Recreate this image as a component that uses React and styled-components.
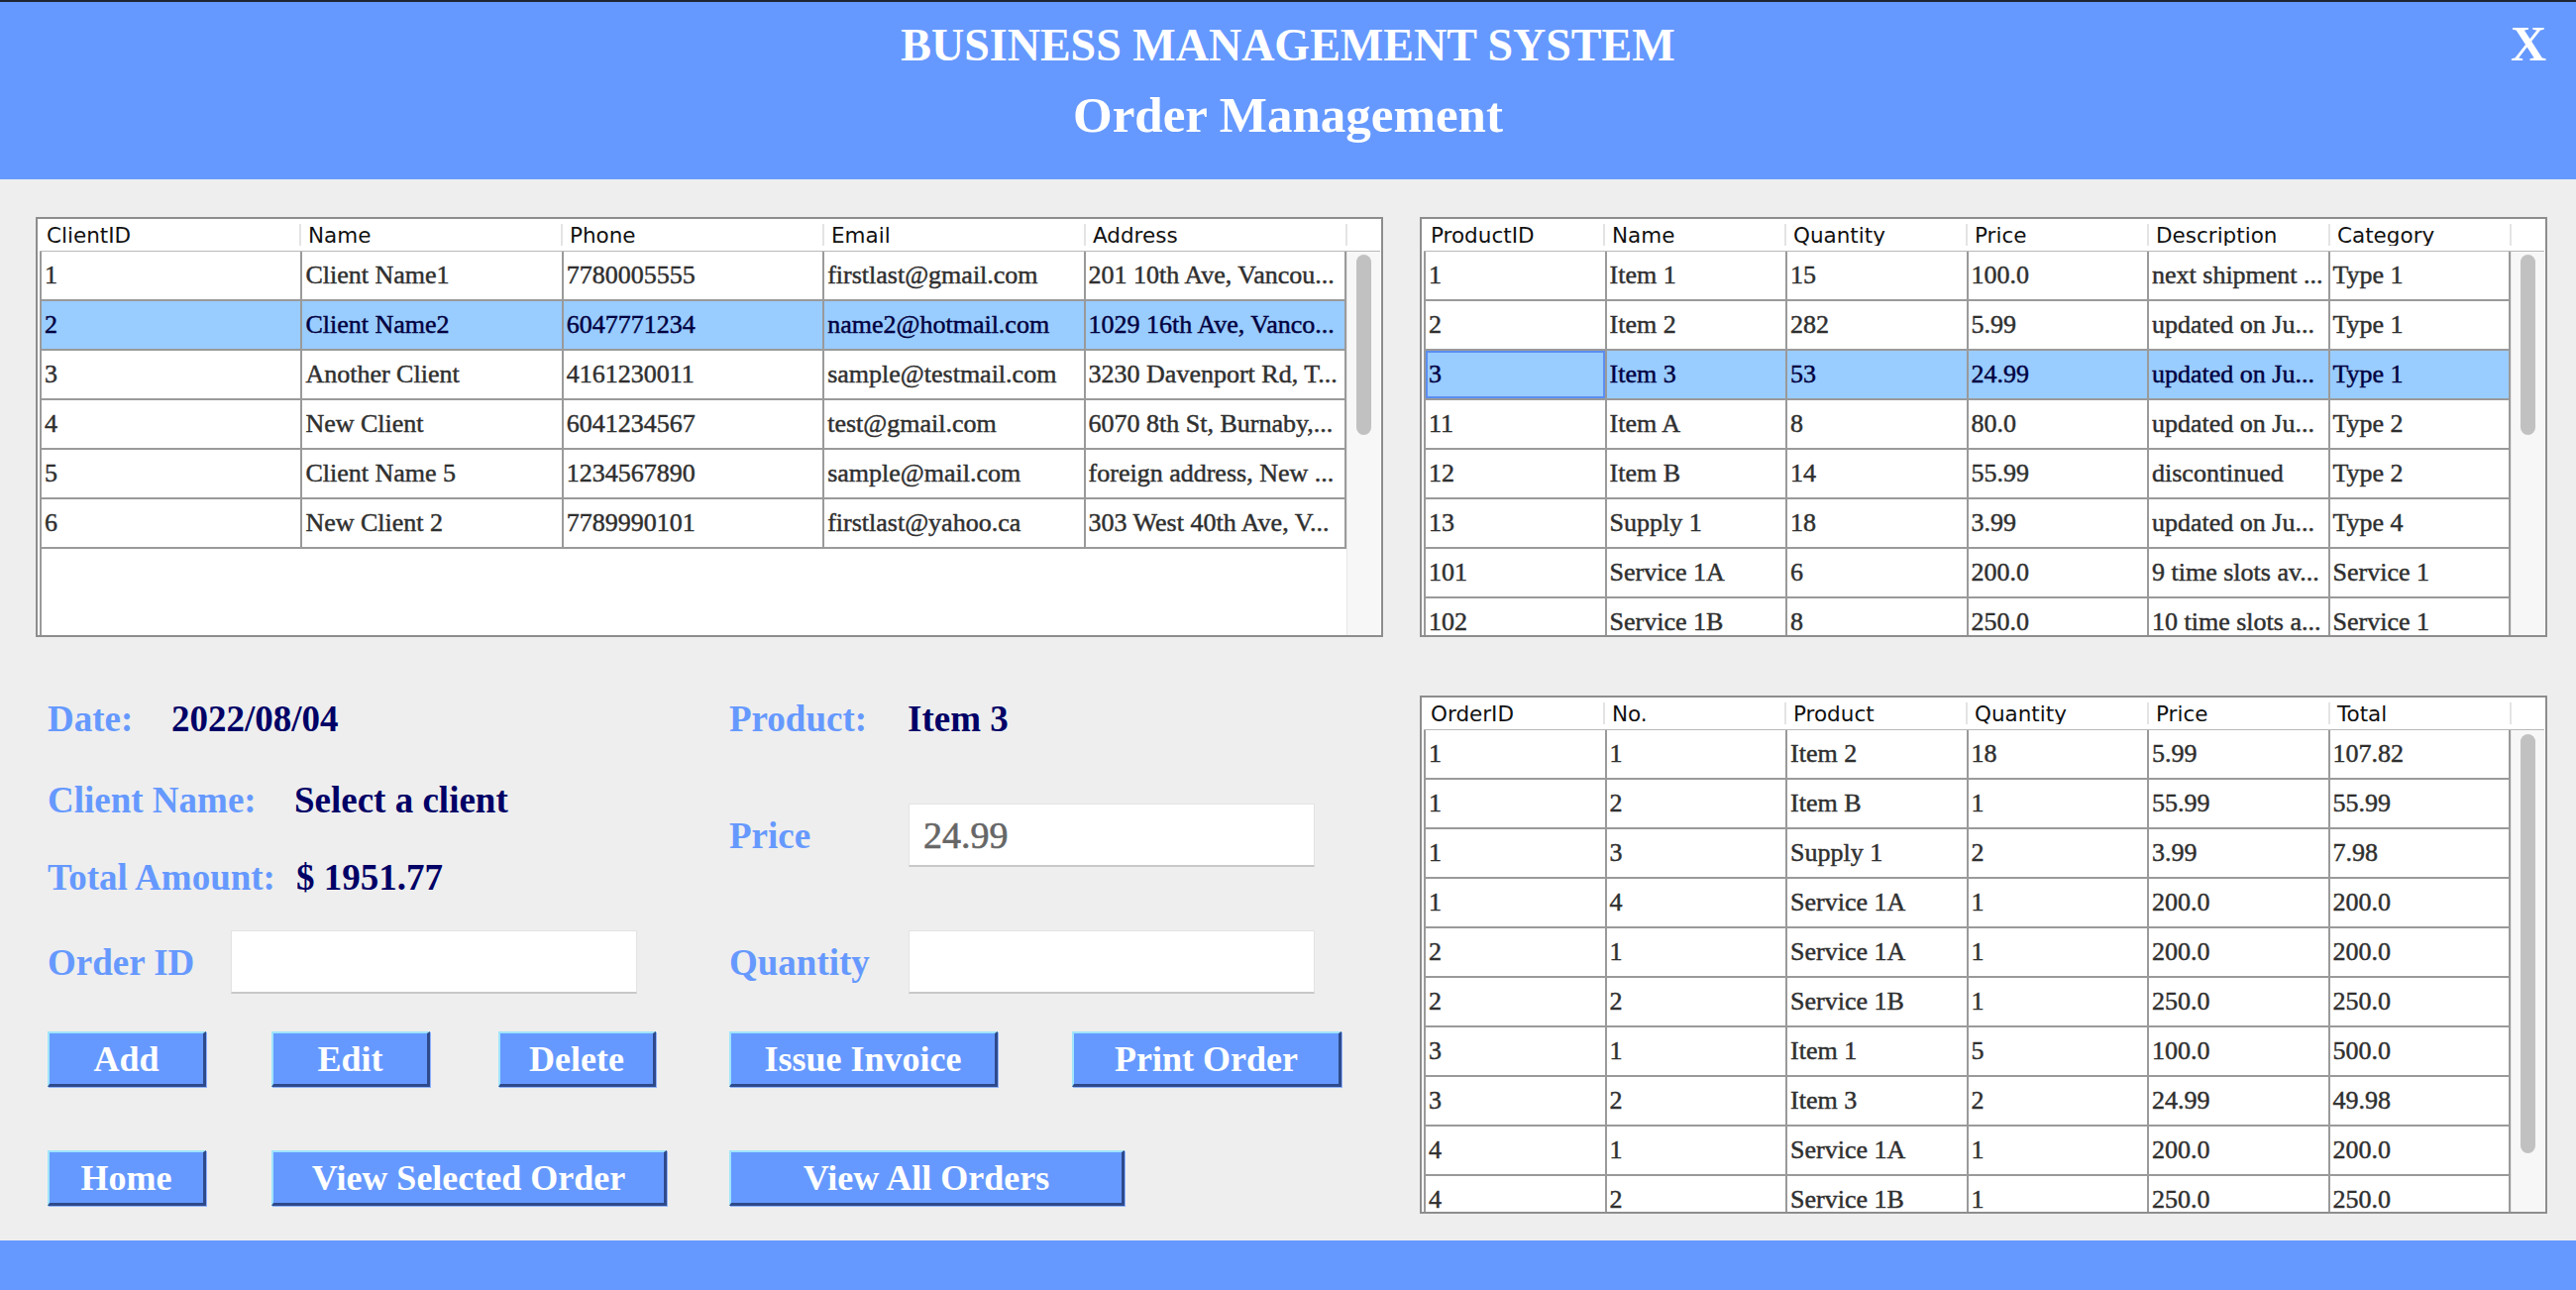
import React from 'react';
import styled, { createGlobalStyle } from 'styled-components';

const GlobalStyle = createGlobalStyle`
  html, body {
    margin: 0;
    padding: 0;
    background: #eeeeee;
  }
  body {
    font-family: "Liberation Serif", serif;
  }
`;

const BLUE = '#6699ff';

const Page = styled.div`
  width: 2600px;
  height: 1302px;
  display: flex;
  flex-direction: column;
  background: #eeeeee;
  overflow: hidden;
`;

const Header = styled.header`
  box-sizing: border-box;
  height: 181px;
  border-top: 2px solid #1f2633;
  background: ${BLUE};
  display: grid;
  grid-template-columns: 1fr auto 1fr;
  color: #fff;
`;

const TitleBlock = styled.div`
  grid-column: 2;
  display: flex;
  flex-direction: column;
  align-items: center;
  padding-top: 21px;
`;

const Title = styled.h1`
  margin: 0;
  font: bold 46px/1 "Liberation Serif", serif;
  white-space: nowrap;
`;

const SubTitle = styled.h2`
  margin: 22px 0 0;
  font: bold 51px/1 "Liberation Serif", serif;
  white-space: nowrap;
`;

const CloseCell = styled.div`
  grid-column: 3;
  display: flex;
  justify-content: flex-end;
  padding: 17px 30px 0 0;
`;

const CloseButton = styled.span`
  font: bold 50px/1 "Liberation Serif", serif;
  color: #fff;
`;

const Main = styled.main`
  flex: 1;
  display: grid;
  grid-template-columns: 1360px 1138px;
  column-gap: 37px;
  padding: 38px 29px 0 36px;
  box-sizing: border-box;
`;

const Column = styled.div`
  display: flex;
  flex-direction: column;
`;

const Footer = styled.footer`
  height: 50px;
  background: ${BLUE};
`;

/* ---------- table ---------- */

const TableFrame = styled.div`
  box-sizing: border-box;
  height: ${(p) => p.$h}px;
  margin-top: ${(p) => p.$mt || 0}px;
  border: 2px solid #8d8d8d;
  background: #fff;
  display: flex;
  flex-direction: column;
  overflow: hidden;
  padding: 0 1px 0 2px;
`;

const HeadRow = styled.div`
  display: flex;
  height: 32px;
  border-bottom: 1px solid #b8b8b8;
  flex-shrink: 0;
`;

const HeadCells = styled.div`
  flex: 1;
  display: grid;
  grid-template-columns: repeat(${(p) => p.$n}, 1fr);
`;

const HeadCell = styled.div`
  display: flex;
  align-items: center;
  margin: 5px 0;
  padding-left: 7px;
  border-right: 2px solid #e4e4e4;
  font: 21.5px "DejaVu Sans", sans-serif;
  color: #111;
  white-space: nowrap;
  overflow: hidden;
`;

const HeadSpacer = styled.div`
  width: 33px;
`;

const BodyWrap = styled.div`
  flex: 1;
  display: flex;
  min-height: 0;
`;

const Rows = styled.div`
  flex: 1;
  overflow: hidden;
  border-left: 2px solid #9a9a9a;
`;

const Row = styled.div`
  box-sizing: border-box;
  display: grid;
  grid-template-columns: repeat(${(p) => p.$n}, 1fr);
  height: 50px;
  border-bottom: 2px solid #9a9a9a;
  background: ${(p) => (p.$selected ? '#99ccff' : '#fff')};
`;

const Cell = styled.div`
  display: flex;
  align-items: center;
  padding-left: 3px;
  border-right: 2px solid #9a9a9a;
  font: 26px "Liberation Serif", serif;
  -webkit-text-stroke: 0.45px currentColor;
  color: ${(p) => (p.$selected ? '#000040' : '#2f2f2f')};
  white-space: nowrap;
  overflow: hidden;
  box-shadow: ${(p) => (p.$focus ? 'inset 0 0 0 2px #5b8ef0' : 'none')};
`;

const ScrollTrack = styled.div`
  width: 33px;
  background: #f7f7f7;
  border-left: 1px solid #e6e6e6;
  display: flex;
  justify-content: center;
  align-items: flex-start;
`;

const Thumb = styled.div`
  margin-top: ${(p) => p.$top}px;
  width: 15px;
  height: ${(p) => p.$h}px;
  border-radius: 8px;
  background: #c1c1c1;
`;

const DataTable = ({ columns, rows, selected, focusCol, height, mt, thumbTop, thumbHeight }) => (
  <TableFrame $h={height} $mt={mt}>
    <HeadRow>
      <HeadCells $n={columns.length}>
        {columns.map((c) => (
          <HeadCell key={c}>{c}</HeadCell>
        ))}
      </HeadCells>
      <HeadSpacer />
    </HeadRow>
    <BodyWrap>
      <Rows>
        {rows.map((r, i) => (
          <Row key={i} $n={columns.length} $selected={i === selected}>
            {r.map((v, j) => (
              <Cell key={j} $selected={i === selected} $focus={i === selected && j === focusCol}>
                {v}
              </Cell>
            ))}
          </Row>
        ))}
      </Rows>
      <ScrollTrack>
        <Thumb $top={thumbTop} $h={thumbHeight} />
      </ScrollTrack>
    </BodyWrap>
  </TableFrame>
);

/* ---------- form ---------- */

const Form = styled.div`
  display: flex;
  flex-direction: column;
  padding-left: 12px;
`;

const Fields = styled.div`
  display: grid;
  grid-template-columns: 688px 1fr;
`;

const FieldRow = styled.div`
  display: flex;
  align-items: center;
  height: 64px;
  margin-top: ${(p) => p.$mt}px;
`;

const Label = styled.span`
  width: ${(p) => p.$w}px;
  flex-shrink: 0;
  font: bold 37px "Liberation Serif", serif;
  color: ${BLUE};
  white-space: nowrap;
`;

const Value = styled.span`
  font: bold 37px "Liberation Serif", serif;
  color: #000066;
  white-space: nowrap;
`;

const TextBox = styled.input`
  box-sizing: border-box;
  width: 410px;
  height: 64px;
  margin: 0;
  padding: 0 0 0 14px;
  background: #fff;
  border: 1px solid #e3e3e3;
  border-bottom: 2px solid #c8c8c8;
  font: 38px "Liberation Serif", serif;
  -webkit-text-stroke: 0.6px currentColor;
  color: #666;
  outline: none;
`;

const ButtonGrid = styled.div`
  display: grid;
  grid-template-columns: 226px 229px 233px 346px 1fr;
  grid-auto-rows: 56px;
  row-gap: 64px;
  margin-top: 38px;
`;

const ActionButton = styled.button`
  box-sizing: border-box;
  width: ${(p) => p.$w}px;
  height: 56px;
  grid-column: ${(p) => p.$col || 'auto'};
  padding: 0;
  background: ${BLUE};
  color: #fff;
  font: bold 36px "Liberation Serif", serif;
  border-style: solid;
  border-width: 2px 3px 3px 2px;
  border-color: #a0e4fb #2e4a8b #2e4a8b #a0e4fb;
  box-shadow: 1px 1px 0 #8fb2ff;
  cursor: pointer;
  white-space: nowrap;
`;

/* ---------- data ---------- */

const clientCols = ['ClientID', 'Name', 'Phone', 'Email', 'Address'];
const clientRows = [
  ['1', 'Client Name1', '7780005555', 'firstlast@gmail.com', '201 10th Ave, Vancou...'],
  ['2', 'Client Name2', '6047771234', 'name2@hotmail.com', '1029 16th Ave, Vanco...'],
  ['3', 'Another Client', '4161230011', 'sample@testmail.com', '3230 Davenport Rd, T...'],
  ['4', 'New Client', '6041234567', 'test@gmail.com', '6070 8th St, Burnaby,...'],
  ['5', 'Client Name 5', '1234567890', 'sample@mail.com', 'foreign address, New ...'],
  ['6', 'New Client 2', '7789990101', 'firstlast@yahoo.ca', '303 West 40th Ave, V...'],
];

const productCols = ['ProductID', 'Name', 'Quantity', 'Price', 'Description', 'Category'];
const productRows = [
  ['1', 'Item 1', '15', '100.0', 'next shipment ...', 'Type 1'],
  ['2', 'Item 2', '282', '5.99', 'updated on Ju...', 'Type 1'],
  ['3', 'Item 3', '53', '24.99', 'updated on Ju...', 'Type 1'],
  ['11', 'Item A', '8', '80.0', 'updated on Ju...', 'Type 2'],
  ['12', 'Item B', '14', '55.99', 'discontinued', 'Type 2'],
  ['13', 'Supply 1', '18', '3.99', 'updated on Ju...', 'Type 4'],
  ['101', 'Service 1A', '6', '200.0', '9 time slots av...', 'Service 1'],
  ['102', 'Service 1B', '8', '250.0', '10 time slots a...', 'Service 1'],
];

const orderCols = ['OrderID', 'No.', 'Product', 'Quantity', 'Price', 'Total'];
const orderRows = [
  ['1', '1', 'Item 2', '18', '5.99', '107.82'],
  ['1', '2', 'Item B', '1', '55.99', '55.99'],
  ['1', '3', 'Supply 1', '2', '3.99', '7.98'],
  ['1', '4', 'Service 1A', '1', '200.0', '200.0'],
  ['2', '1', 'Service 1A', '1', '200.0', '200.0'],
  ['2', '2', 'Service 1B', '1', '250.0', '250.0'],
  ['3', '1', 'Item 1', '5', '100.0', '500.0'],
  ['3', '2', 'Item 3', '2', '24.99', '49.98'],
  ['4', '1', 'Service 1A', '1', '200.0', '200.0'],
  ['4', '2', 'Service 1B', '1', '250.0', '250.0'],
];

const App = () => (
  <Page>
    <GlobalStyle />
    <Header>
      <TitleBlock>
        <Title>BUSINESS MANAGEMENT SYSTEM</Title>
        <SubTitle>Order Management</SubTitle>
      </TitleBlock>
      <CloseCell>
        <CloseButton>X</CloseButton>
      </CloseCell>
    </Header>

    <Main>
      <Column>
        <DataTable
          columns={clientCols}
          rows={clientRows}
          selected={1}
          height={424}
          thumbTop={3}
          thumbHeight={182}
        />
        <Form>
          <Fields>
            <Column>
              <FieldRow $mt={50}>
                <Label $w={125}>Date:</Label>
                <Value>2022/08/04</Value>
              </FieldRow>
              <FieldRow $mt={18}>
                <Label $w={249}>Client Name:</Label>
                <Value>Select a client</Value>
              </FieldRow>
              <FieldRow $mt={14}>
                <Label $w={251}>Total Amount:</Label>
                <Value>$ 1951.77</Value>
              </FieldRow>
              <FieldRow $mt={22}>
                <Label $w={185}>Order ID</Label>
                <TextBox readOnly defaultValue="" />
              </FieldRow>
            </Column>
            <Column>
              <FieldRow $mt={50}>
                <Label $w={180}>Product:</Label>
                <Value>Item 3</Value>
              </FieldRow>
              <FieldRow $mt={54}>
                <Label $w={181}>Price</Label>
                <TextBox readOnly defaultValue="24.99" />
              </FieldRow>
              <FieldRow $mt={64}>
                <Label $w={181}>Quantity</Label>
                <TextBox readOnly defaultValue="" />
              </FieldRow>
            </Column>
          </Fields>
          <ButtonGrid>
            <ActionButton $w={160}>Add</ActionButton>
            <ActionButton $w={160}>Edit</ActionButton>
            <ActionButton $w={159}>Delete</ActionButton>
            <ActionButton $w={271}>Issue Invoice</ActionButton>
            <ActionButton $w={272}>Print Order</ActionButton>
            <ActionButton $w={160}>Home</ActionButton>
            <ActionButton $w={399} $col="2 / 4">View Selected Order</ActionButton>
            <ActionButton $w={399} $col="4 / 6">View All Orders</ActionButton>
          </ButtonGrid>
        </Form>
      </Column>

      <Column>
        <DataTable
          columns={productCols}
          rows={productRows}
          selected={2}
          focusCol={0}
          height={424}
          thumbTop={3}
          thumbHeight={182}
        />
        <DataTable
          columns={orderCols}
          rows={orderRows}
          selected={-1}
          height={523}
          mt={59}
          thumbTop={4}
          thumbHeight={423}
        />
      </Column>
    </Main>

    <Footer />
  </Page>
);

export default App;
